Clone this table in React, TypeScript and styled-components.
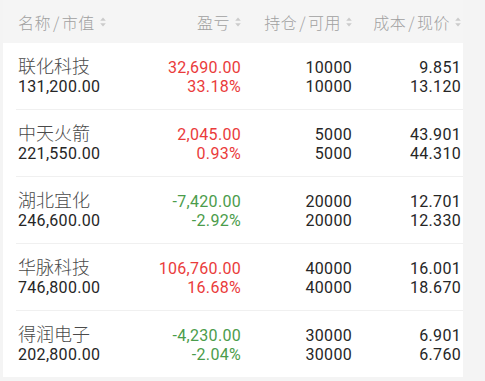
import React from 'react';
import styled, { createGlobalStyle } from 'styled-components';

type Position = {
	name: string;
	value: string;
	profit: string;
	ratio: string;
	hold: string;
	usable: string;
	cost: string;
	price: string;
};

const positions: Position[] = [
	{ name: '联化科技', value: '131,200.00', profit: '32,690.00', ratio: '33.18%', hold: '10000', usable: '10000', cost: '9.851', price: '13.120' },
	{ name: '中天火箭', value: '221,550.00', profit: '2,045.00', ratio: '0.93%', hold: '5000', usable: '5000', cost: '43.901', price: '44.310' },
	{ name: '湖北宜化', value: '246,600.00', profit: '-7,420.00', ratio: '-2.92%', hold: '20000', usable: '20000', cost: '12.701', price: '12.330' },
	{ name: '华脉科技', value: '746,800.00', profit: '106,760.00', ratio: '16.68%', hold: '40000', usable: '40000', cost: '16.001', price: '18.670' },
	{ name: '得润电子', value: '202,800.00', profit: '-4,230.00', ratio: '-2.04%', hold: '30000', usable: '30000', cost: '6.901', price: '6.760' },
];

const SortIcon = () => (
	<SortSvg viewBox="0 0 6 10" width="6" height="10">
		<path d="M3 0.5 L5.8 3.8 H0.2 Z" />
		<path d="M3 9.5 L5.8 6.2 H0.2 Z" />
	</SortSvg>
);

export default function App() {
	return (
		<>
			<GlobalStyle />
			<Page>
				<Header>
					<HeadCell>
						名称<Slash>/</Slash>市值
						<SortIcon />
					</HeadCell>
					<HeadCell $right>
						盈亏
						<SortIcon />
					</HeadCell>
					<HeadCell $right>
						持仓<Slash>/</Slash>可用
						<SortIcon />
					</HeadCell>
					<HeadCell $right>
						成本<Slash>/</Slash>现价
						<SortIcon />
					</HeadCell>
				</Header>
				<Card>
					{positions.map((p) => {
						const loss = p.profit.startsWith('-');
						return (
							<Row key={p.name}>
								<Cell>
									<Name>{p.name}</Name>
									<Num>{p.value}</Num>
								</Cell>
								<Cell $right>
									<Num $tone={loss ? 'down' : 'up'}>{p.profit}</Num>
									<Num $tone={loss ? 'down' : 'up'}>{p.ratio}</Num>
								</Cell>
								<Cell $right>
									<Num>{p.hold}</Num>
									<Num>{p.usable}</Num>
								</Cell>
								<Cell $right>
									<Num>{p.cost}</Num>
									<Num>{p.price}</Num>
								</Cell>
							</Row>
						);
					})}
				</Card>
			</Page>
		</>
	);
}

const GlobalStyle = createGlobalStyle`
	html, body {
		margin: 0;
		padding: 0;
		background: #f4f4f4;
	}
`;

const Page = styled.div`
	width: 485px;
	height: 381px;
	overflow: hidden;
	background: #f4f4f4;
	font-family: Roboto, 'Noto Sans CJK SC', sans-serif;
`;

const columns = `
	display: grid;
	grid-template-columns: 1fr 110px 111px 109px;
`;

const Header = styled.div`
	${columns}
	align-items: center;
	width: 460px;
	height: 43px;
	box-sizing: border-box;
	margin-left: 3px;
	padding: 1px 2px 0 15px;
	background: #f5f5f5;
`;

const HeadCell = styled.div<{ $right?: boolean }>`
	display: flex;
	align-items: center;
	justify-content: ${({ $right }) => ($right ? 'flex-end' : 'flex-start')};
	color: #a0a0a0;
	font-family: 'Noto Sans CJK SC', sans-serif;
	font-size: 16px;
	font-weight: 300;
	letter-spacing: 0.5px;
	line-height: 20px;
	white-space: nowrap;
`;

const Slash = styled.span`
	margin: 0 2px;
`;

const SortSvg = styled.svg`
	fill: #cbcbcb;
	flex: none;
	margin-left: 5px;
`;

const Card = styled.div`
	width: 460px;
	margin-left: 3px;
	background: #ffffff;
`;

const Row = styled.div`
	${columns}
	height: 67px;
	box-sizing: border-box;
	margin-left: 13px;
	padding: 15px 2px 0 2px;
	border-bottom: 1px solid #f0f0f0;

	&:last-child {
		border-bottom: none;
		height: 66px;
	}
`;

const Cell = styled.div<{ $right?: boolean }>`
	display: flex;
	flex-direction: column;
	align-items: ${({ $right }) => ($right ? 'flex-end' : 'flex-start')};
`;

const Name = styled.div`
	margin: -2px 0 2px;
	color: #4a4a4a;
	font-family: 'Noto Sans CJK SC', sans-serif;
	font-size: 18px;
	font-weight: 300;
	line-height: 19px;
	white-space: nowrap;
`;

const Num = styled.div<{ $tone?: 'up' | 'down' }>`
	color: ${({ $tone }) => ($tone === 'up' ? '#ea3b3b' : $tone === 'down' ? '#4b9c4b' : '#262626')};
	font-size: 16px;
	line-height: 19px;
	letter-spacing: 0.3px;
	white-space: nowrap;
`;
